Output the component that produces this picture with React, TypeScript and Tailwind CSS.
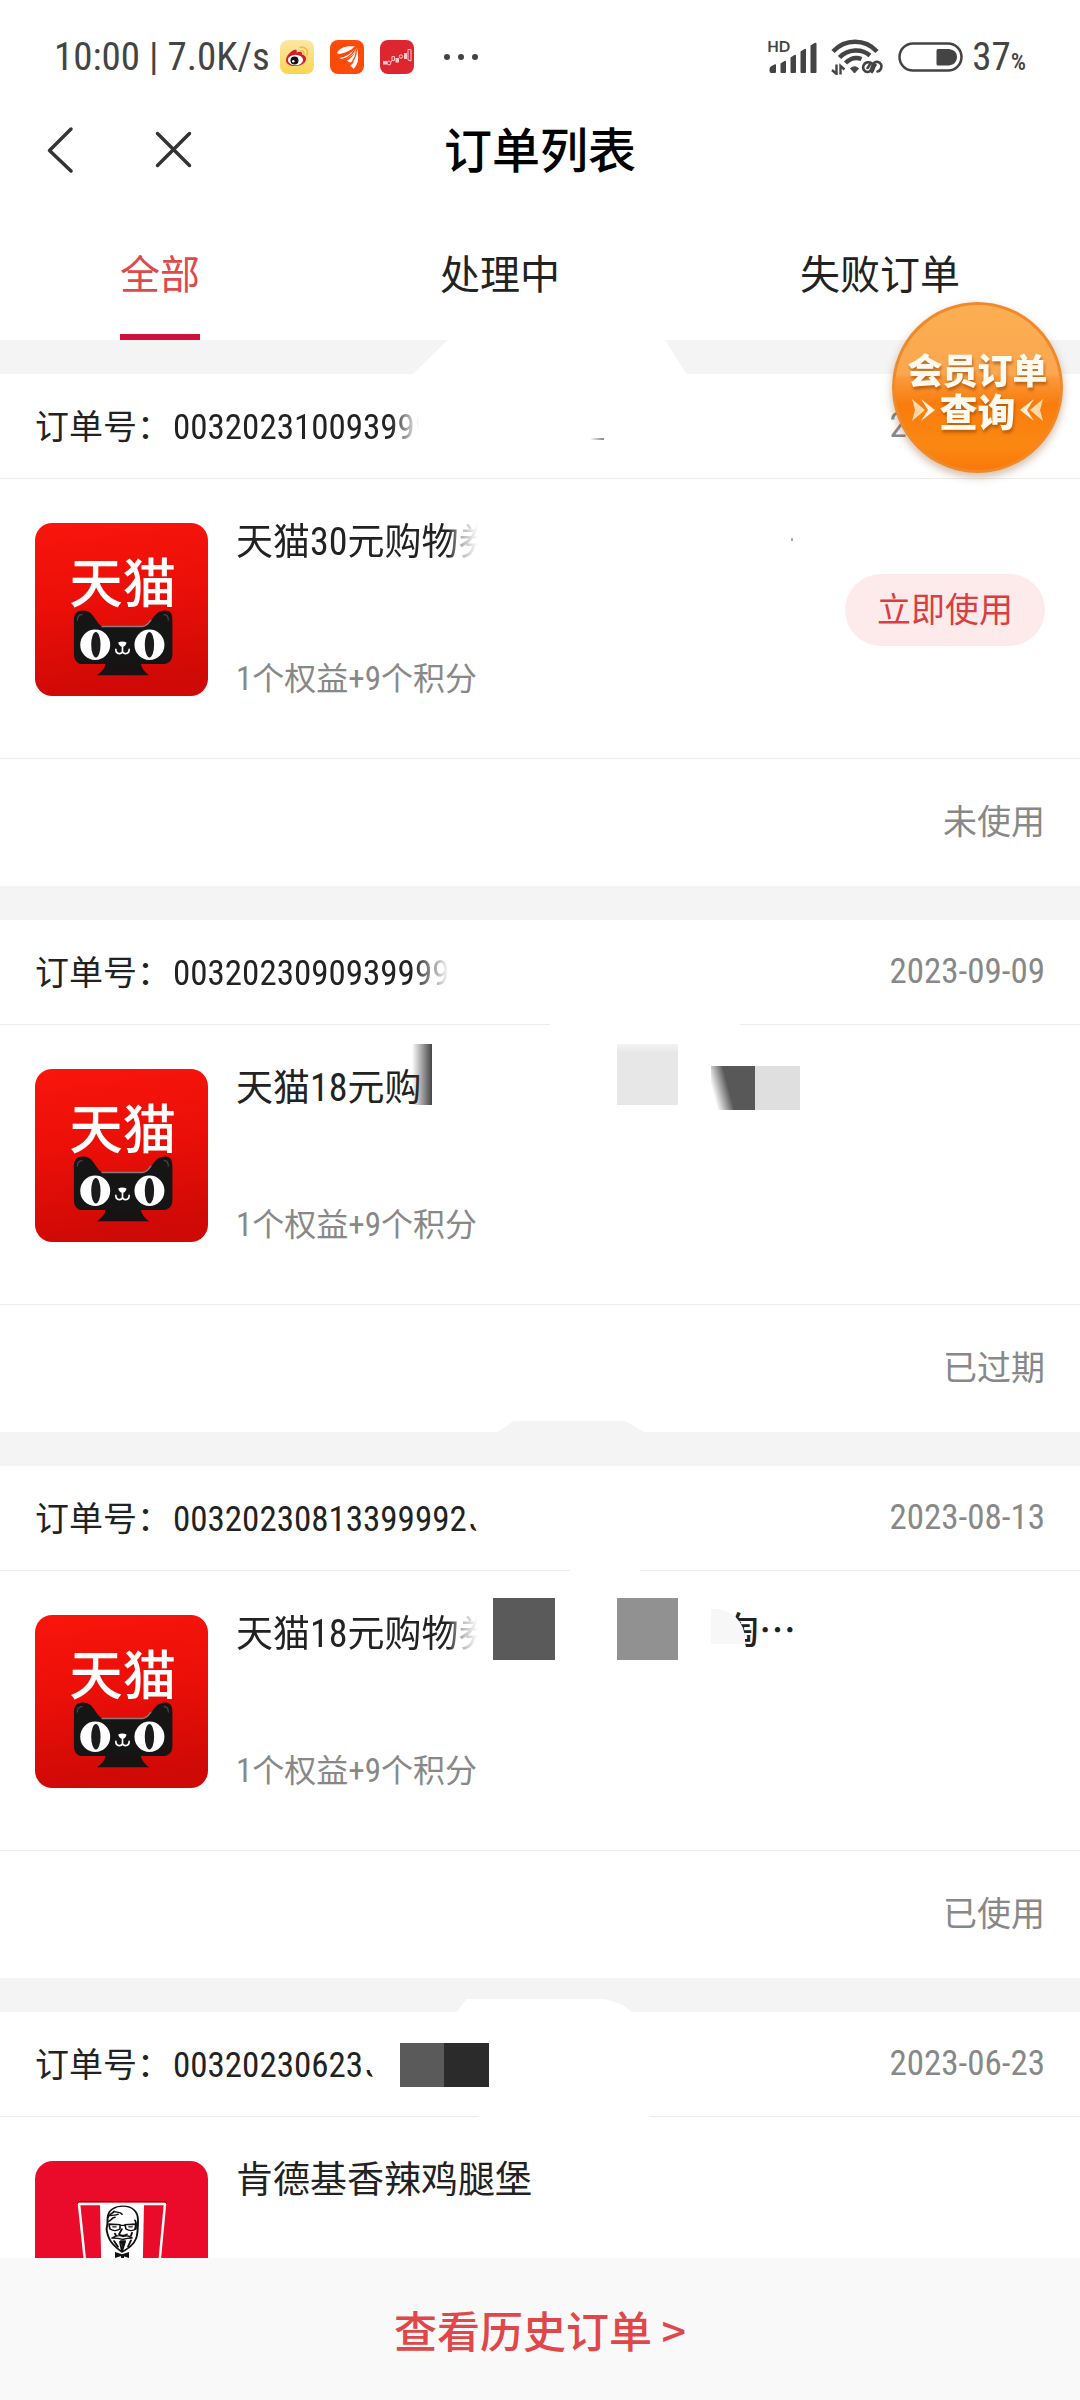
import type { ReactNode } from 'react'

const cjk = "font-['Noto_Sans_CJK_SC',sans-serif]"
const narrow = "font-['Roboto_Condensed','Noto_Sans_CJK_SC',sans-serif]"

function StatusBar() {
  return (
    <div className="flex h-[100px] shrink-0 items-center justify-between pt-[14px] pr-[54px] pl-[54px] text-[#444]">
      <div className="flex items-center">
        <span className={`${narrow} text-[39px] leading-[44px] whitespace-pre`}>10:00 | 7.0K/s</span>
        <div className="ml-[10px] flex items-center gap-4">
          <svg className="size-[34px]" viewBox="0 0 34 34">
            <defs>
              <linearGradient id="weibo" x1="0" y1="0" x2="0" y2="1">
                <stop offset="0" stopColor="#fbe7a6" />
                <stop offset="1" stopColor="#fbd650" />
              </linearGradient>
            </defs>
            <rect width="34" height="34" rx="8" fill="url(#weibo)" />
            <path d="M6 20c0-4 5-9 8-10 3-.8 3 1 2.600 2.600 3-1.500 6-1.200 5.500 2C25 15.500 26 17 26 19c0 4-5 7-10.500 7S6 24 6 20z" fill="#d5182b" />
            <ellipse cx="15.500" cy="20" rx="7.600" ry="5.200" fill="#fff" />
            <circle cx="14.500" cy="20.500" r="4" fill="#111" />
            <circle cx="13.300" cy="21.300" r="1.200" fill="#fff" />
            <path d="M20 7.500c5-1.500 8.500 3 7 7.500M20.500 11c2.500-.8 4 1 3.300 3.300" fill="none" stroke="#f0bb4c" strokeWidth="1.600" strokeLinecap="round" />
          </svg>
          <svg className="size-[34px]" viewBox="0 0 34 34">
            <rect width="34" height="34" rx="8" fill="#fb4b0b" />
            <path d="M7 13C9.500 8 15 5.500 25.500 6.500c-4 4-8 6-11.500 7-2.500.7-5.500.5-7-.5z" fill="#fff" />
            <path d="M9.500 18c6-1 13-5 16.500-11 .5 5-4 9.500-8.500 11-3 1-6.500 1.200-8 0z" fill="#fff" />
            <path d="M17 20.500c5-2.500 8.500-7 9.500-13 3 6 1.500 12-3.500 14.500-2 .8-4.500.5-6-1.500z" fill="#fff" />
            <path d="M20 26c4-3 7-8 7-14.500 2.500 6 1 13-3.500 17.500-.8-1.500-1.800-2.500-3.500-3z" fill="#fff" />
            <path d="M10 14.500c7-1 12-4 15.500-8M12.500 19.500c7-2 11.500-7 13.500-12.500M19.500 24.500c5-4 7-9 7-16" fill="none" stroke="#fb4b0b" strokeWidth="1.200" />
          </svg>
          <svg className="size-[34px]" viewBox="0 0 34 34">
            <rect width="34" height="34" rx="8" fill="#dd2630" />
            <g fill="none" stroke="#ffc9c9" strokeWidth="1">
              <circle cx="9" cy="23" r="1.900" />
              <path d="M12 16.500h2.500v4H12zM11 22l1.500-2" />
              <circle cx="21" cy="16.500" r="1.700" />
              <path d="M28 9.500h3v11.500l-3-1z" />
            </g>
            <path d="M3 21h4v3.500H3zM15.500 18h3.500v4.500h-3.500zM24 13h3v6h-3z" fill="#ffc9c9" />
          </svg>
        </div>
        <svg className="ml-[29px] h-[8px] w-[36px]" viewBox="0 0 36 8" fill="#444">
          <circle cx="4" cy="4" r="3" />
          <circle cx="18" cy="4" r="3" />
          <circle cx="32" cy="4" r="3" />
        </svg>
      </div>
      <div className="flex items-center">
        <div className="relative h-[34px] w-[50px]">
          <span className="absolute -top-px -left-px font-['Lato',sans-serif] text-[15px] leading-[15px] font-bold">HD</span>
          <svg className="h-[34px] w-[50px]" viewBox="0 0 50 34" fill="#444">
            <path d="M1.500 29q0-2 2-3l3.500-1.700q1-.5 1 .7V32q0 1-1 1H3.500q-2 0-2-2zM12.500 23.500l4-2.500q1.500-.8 1.500.8V32q0 1-1 1h-3.500q-1 0-1-1zM22.500 17.500l4-2.500q1.500-.8 1.500.8V32q0 1-1 1h-3.500q-1 0-1-1zM32.500 11.500l4-2.500q1.500-.8 1.500.8V32q0 1-1 1h-3.500q-1 0-1-1zM42.500 5.500l4-2.500q2-.8 2 .8V32q0 1-1 1h-4q-1 0-1-1z" />
          </svg>
        </div>
        <svg className="ml-[13px] h-[36px] w-[52px]" viewBox="0 0 52 36" fill="none" stroke="#444">
          <path d="M2 12.500C14-.5 34-.5 46 12.500" strokeWidth="4.500" />
          <path d="M8.500 18.500C17 9.500 31 9.500 39 16.500" strokeWidth="4.500" />
          <path d="M14.500 24c5-5 11-6 16-4" strokeWidth="4.500" />
          <path d="M23.500 34l-4-4.500q4-3.500 8 0z" fill="#444" strokeWidth="1" />
          <path d="M5.500 25.500V35L1 31M9.500 35.500V27l4 3.500" strokeWidth="2.400" />
          <path d="M40.500 24c-2.500-1.500-6.500-1-8 2.500-1.200 3.500 1 6.500 4 6.500 4.500 0 3.500-5 6-8.500 2-2.500 6-2 7.500.8 1.200 3-.5 6.700-3.500 7.200M36.500 29c1.500-1 1.500-3.500 3.500-5M44.500 26c-2 1.500-1.500 4.500-3.500 7" strokeWidth="2.600" strokeLinecap="round" />
        </svg>
        <svg className="ml-[15px] h-[30px] w-[66px]" viewBox="0 0 66 30">
          <rect x="1.500" y="1.500" width="62" height="27" rx="13.500" fill="none" stroke="#444" strokeWidth="2.500" />
          <path d="M40 7h11q8 1 8 8t-8 8.500H40q-1.500 0-1.500-1.500V8.500Q38.500 7 40 7z" fill="#444" />
        </svg>
        <span className={`${narrow} ml-2 text-[39px] leading-[44px]`}>
          37<span className="text-[24px] leading-none font-medium">%</span>
        </span>
      </div>
    </div>
  )
}

function Header() {
  return (
    <header className="grid h-[100px] shrink-0 grid-cols-3 items-center px-[44px]">
      <div className="flex items-center gap-[77px]">
        <button type="button" aria-label="返回">
          <svg className="h-[48px] w-[32px]" viewBox="0 0 32 48" fill="none" stroke="#333" strokeWidth="3.500" strokeLinecap="round" strokeLinejoin="round">
            <path d="M27 3L5.500 24.500 27 45" />
          </svg>
        </button>
        <button type="button" aria-label="关闭">
          <svg className="size-[40px]" viewBox="0 0 40 40" fill="none" stroke="#333" strokeWidth="3.500" strokeLinecap="round">
            <path d="M4.500 3.500l32 32M36.500 3.500l-32 32" />
          </svg>
        </button>
      </div>
      <h1 className="pb-[6px] text-center text-[48px] leading-[56px] font-medium whitespace-nowrap text-black">订单列表</h1>
    </header>
  )
}

function Tabs() {
  const tabs = ['全部', '处理中', '失败订单']
  return (
    <nav className="flex h-[140px] shrink-0 items-end justify-around text-[40px]">
      {tabs.map((t, i) => (
        <button
          key={t}
          type="button"
          className={
            i === 0
              ? 'border-b-[6px] border-[#cf0f3c] pb-[38px] leading-[48px] text-[#dc4a4c]'
              : 'border-b-[6px] border-transparent pb-[38px] leading-[48px] text-[#222]'
          }
        >
          {t}
        </button>
      ))}
    </nav>
  )
}

function TmallIcon() {
  return (
    <svg className="size-[173px] shrink-0" viewBox="45 39 520 520" role="img" aria-label="天猫">
      <defs>
        <linearGradient id="tmall" x1="0" y1="0" x2="0.150" y2="1">
          <stop offset="0" stopColor="#f9150c" />
          <stop offset="0.500" stopColor="#ea0f08" />
          <stop offset="1" stopColor="#cf0906" />
        </linearGradient>
      </defs>
      <rect x="45" y="39" width="520" height="520" rx="52" fill="url(#tmall)" />
      <text x="148" y="279" fontSize="161" fontWeight="500" fill="#fff" className="font-['Noto_Sans_CJK_SC',sans-serif]">
        天猫
      </text>
      <path d="M258 455h104c2 20 12 30 26 42H231c16-12 26-22 27-42z" fill="#181212" />
      <path
        d="M162 332c0-22 10-30 27-30 24 0 30 16 42 32 8 12 12 15 24 15h112c13 0 18-4 26-15 12-18 22-32 44-32 14 0 21 8 21 28v102c0 20-10 31-32 31H190c-20 0-28-12-28-32z"
        fill="#151515"
      />
      <path d="M245 350h122c14 0 20-10 27-20" fill="none" stroke="#8c7b7b" strokeWidth="4" />
      <path d="M172 332c0-12 6-18 16-18M446 332c0-12-5-18-14-18" fill="none" stroke="#444" strokeWidth="4" />
      <ellipse cx="226" cy="405" rx="45" ry="46" fill="#fff" />
      <ellipse cx="389" cy="405" rx="45" ry="46" fill="#fff" />
      <ellipse cx="228" cy="405" rx="14" ry="38" fill="#1b1b1b" />
      <ellipse cx="389" cy="405" rx="14" ry="38" fill="#1b1b1b" />
      <path d="M295 398q12-5 25 0-2 12-12 13-10-1-13-13z" fill="#fff" />
      <path d="M308 410v12M288 419c0 16 20 16 20 4 0 12 20 12 20-4" fill="none" stroke="#fff" strokeWidth="5" strokeLinecap="round" />
    </svg>
  )
}

function KfcIcon() {
  return (
    <svg className="size-[173px] shrink-0" viewBox="0 0 173 173" role="img" aria-label="肯德基">
      <rect width="173" height="173" rx="18" fill="#e90b29" />
      <path d="M44 43h86l-9 95H54z" fill="#e90b29" stroke="#fff" strokeWidth="2.500" strokeLinejoin="round" />
      <path d="M65 43h44l-2 95H67z" fill="#fff" />
      <path d="M42 43l2-2.500h86l2 2.500" fill="none" stroke="#6d0718" strokeWidth="1" />
      <g transform="scale(1 .74)" fill="none" stroke="#111" strokeWidth="1.900" strokeLinecap="round" strokeLinejoin="round">
        <path d="M73 74c1-8 7-13 15-13 10 0 15 8 15 19 0 9 0 18-2 25-2 8-8 13-14 18-5-5-11-11-13-19-2-6-3-11-2-16 1-5 0-9 1-14z" />
        <path d="M73 76c1-4 4-4 6-8 2 2 6 0 8 4M73 74c4-1 8 0 10-2M73 82c4-2 3-5 7-6M100 80c2 4 1 8 0 12" />
        <path d="M74 86h11v6q-5 4-10 0zM90 86h11v6q-5 4-10 0zM85 87h5M74 85l11 1M101 85l-11 1" strokeWidth="1.600" />
        <path d="M87 92l-3 7q4 3 8 0M77 104q6-5 11-2 5-3 9 2-5 0-9 2-5-2-11-2zM85 109l2 13 3-13zM79 108l4 8M96 107l-3 9" />
        <path d="M80 98l1 3M97 97l-1 4M78 89h3M94 89h3" />
        <path d="M80 123l7 3 7-3v8l-7-3-7 3zM86 128h3v22h-3zM85 107h6l-3 12z" fill="#111" stroke="none" />
      </g>
    </svg>
  )
}

interface Order {
  no: string
  noClass?: string
  remnant?: boolean
  date: string
  name: ReactNode
  nameClass?: string
  points?: string
  status?: string
  usable?: boolean
  kfc?: boolean
  marks?: ReactNode
}

const num = `${narrow} text-[38px]`

const orders: Order[] = [
  {
    no: '003202310093999',
    noClass: '[mask-image:linear-gradient(90deg,#000_218px,transparent_246px)]',
    date: '2023-10-09',
    name: <>天猫<span className={num}>30</span>元购物券</>,
    nameClass: '[mask-image:linear-gradient(90deg,#000_212px,#0005_226px,transparent_242px)]',
    points: '1个权益+9个积分',
    status: '未使用',
    usable: true,
    marks: (
      <>
        <div className="absolute -top-[34px] left-[412px] h-[35px] w-[275px] bg-white [clip-path:polygon(13%_0,92%_0,100%_100%,0_100%)]" />
        <div className="absolute top-[64px] left-[590px] h-[2px] w-[14px] bg-gradient-to-r from-white to-[#888]" />
        <div className="absolute top-[164px] left-[791px] h-[3px] w-[2px] bg-[#aaa]" />
      </>
    ),
  },
  {
    no: '0032023090939999',
    noClass: '[mask-image:linear-gradient(90deg,#000_240px,transparent_276px)]',
    date: '2023-09-09',
    name: <>天猫<span className={num}>18</span>元购</>,
    points: '1个权益+9个积分',
    status: '已过期',
    marks: (
      <>
        <div className="absolute top-[104px] left-[550px] h-[1px] w-[190px] bg-white" />
        <div className="absolute top-[124px] left-[412px] h-[61px] w-[20px] bg-gradient-to-r from-transparent to-[#444]" />
        <div className="absolute top-[124px] left-[617px] h-[61px] w-[61px] bg-gradient-to-b from-[#f3f3f3] to-[#e7e7e7] to-15%" />
        <div className="absolute top-[146px] left-[711px] h-[44px] w-[44px] bg-[linear-gradient(75deg,#fff_12%,#585858_42%)]" />
        <div className="absolute top-[146px] left-[755px] h-[44px] w-[45px] bg-[#dfdfdf]" />
      </>
    ),
  },
  {
    no: '00320230813399992',
    remnant: true,
    date: '2023-08-13',
    name: <>天猫<span className={num}>18</span>元购物券</>,
    nameClass: '[mask-image:linear-gradient(90deg,#000_212px,#0005_226px,transparent_242px)]',
    points: '1个权益+9个积分',
    status: '已使用',
    marks: (
      <>
        <div className="absolute -top-[45px] left-[496px] h-[12px] w-[150px] bg-[#f4f4f4] [clip-path:polygon(12%_0,86%_0,100%_100%,0_100%)]" />
        <div className="absolute top-[104px] left-[570px] h-[1px] w-[70px] bg-white" />
        <div className="absolute top-[132px] left-[493px] h-[62px] w-[62px] bg-[#5a5a5a]" />
        <div className="absolute top-[132px] left-[617px] h-[62px] w-[61px] bg-[#919191]" />
        <div className="absolute top-[144px] left-[722px] text-[37px] leading-[37px] font-medium text-[#222]">
          <span className="inline-block [clip-path:polygon(28%_0,100%_0,100%_100%,62%_100%,55%_60%)]">淘</span>…
        </div>
        <div className="absolute top-[143px] left-[711px] h-[35px] w-[34px] rounded-tr-[30px] bg-[#f7f7f7]" />
      </>
    ),
  },
  {
    no: '00320230623',
    remnant: true,
    date: '2023-06-23',
    name: '肯德基香辣鸡腿堡',
    kfc: true,
    marks: (
      <>
        <div className="absolute -top-[13px] left-[456px] h-[14px] w-[177px] bg-white [clip-path:polygon(6%_0,84%_0,94%_40%,100%_100%,0_100%)]" />
        <div className="absolute top-[31px] left-[400px] h-[44px] w-[44px] bg-[#5a5a5a]" />
        <div className="absolute top-[31px] left-[444px] h-[44px] w-[45px] bg-[#2b2b2b]" />
        <div className="absolute top-[104px] left-[478px] h-[1px] w-[172px] bg-white" />
      </>
    ),
  },
]

function Points({ text }: { text: string }) {
  return (
    <p className="text-[32px] leading-[34px] text-[#888]">
      {text.split(/([0-9+])/).map((part, i) =>
        /[0-9+]/.test(part) ? (
          <span key={i} className={`${narrow} text-[33px]`}>{part}</span>
        ) : (
          part
        ),
      )}
    </p>
  )
}

function OrderCard({ order }: { order: Order }) {
  return (
    <article className="relative mb-[34px] bg-white">
      <div className="flex h-[105px] items-center justify-between border-b border-[#ececec] px-[35px] leading-[36px]">
        <div className="flex items-baseline gap-[2px] text-[#222]">
          <span className="text-[34px]">订单号：</span>
          <span className={`${narrow} text-[35px] ${order.noClass ?? ''}`}>{order.no}</span>
          {order.remnant && (
            <span className={`${narrow} text-[35px] [clip-path:polygon(0_30%,60%_100%,0_100%)]`}>3</span>
          )}
        </div>
        <time className={`${narrow} text-[35px] text-[#888]`}>{order.date}</time>
      </div>
      <div className="flex items-center gap-[28px] border-b border-[#ececec] px-[35px] pt-[44px] pb-[62px]">
        {order.kfc ? <KfcIcon /> : <TmallIcon />}
        <div className="flex flex-1 flex-col justify-between self-stretch">
          <h2 className={`-mt-[6px] text-[37px] leading-[44px] text-[#222] ${order.nameClass ?? ''}`}>{order.name}</h2>
          {order.points && <Points text={order.points} />}
        </div>
        {order.usable && (
          <button type="button" className="rounded-full bg-[#fdebec] px-[32px] pt-[16px] pb-[20px] text-[34px] leading-[36px] text-[#d93f42]">
            立即使用
          </button>
        )}
      </div>
      {order.status && (
        <p className="px-[35px] pt-[43px] pb-[48px] text-right text-[34px] leading-[36px] text-[#888]">{order.status}</p>
      )}
      {order.marks}
    </article>
  )
}

function MemberBadge() {
  return (
    <button
      type="button"
      className="absolute top-[302px] right-[17px] flex size-[171px] flex-col items-center justify-center rounded-full border-[3px] border-[#ee8a2c] bg-[linear-gradient(#fcae52_0%,#fba750_42%,#fa9a3c_44%,#f97c0c_60%,#fb8812_85%,#f9780a_100%)] pt-[4px] font-black text-[#fffaf0] shadow-[0_4px_8px_rgba(120,60,0,0.35)] [text-shadow:1px_3px_3px_rgba(150,70,0,0.6)]"
    >
      <span className="text-[35px] leading-[40px] whitespace-nowrap">会员订单</span>
      <span className="flex items-center gap-[3px] text-[38px] leading-[42px] whitespace-nowrap">
        <svg className="h-[26px] w-[26px]" viewBox="0 0 26 26">
          <path d="M2 2l13 11L2 24l3-11z" fill="#ffd9a8" />
          <path d="M11 2l14 11-14 11 7-11z" fill="#fff1dc" />
        </svg>
        查询
        <svg className="h-[26px] w-[26px]" viewBox="0 0 26 26">
          <path d="M24 2L11 13l13 11-3-11z" fill="#ffd9a8" />
          <path d="M15 2L1 13l14 11-7-11z" fill="#fff1dc" />
        </svg>
      </span>
    </button>
  )
}

export default function App() {
  return (
    <main className={`${cjk} relative flex h-screen flex-col bg-white`}>
      <StatusBar />
      <Header />
      <Tabs />
      <section className="flex-1 overflow-y-auto bg-[#f4f4f4] pt-[34px] [scrollbar-width:none]">
        {orders.map((o) => (
          <OrderCard key={o.no} order={o} />
        ))}
      </section>
      <footer className="flex h-[142px] shrink-0 items-center justify-center bg-[#f9f9f9]">
        <a href="#history" className="text-[43px] leading-[48px] font-medium text-[#e0474a]">
          查看历史订单 &gt;
        </a>
      </footer>
      <MemberBadge />
    </main>
  )
}
